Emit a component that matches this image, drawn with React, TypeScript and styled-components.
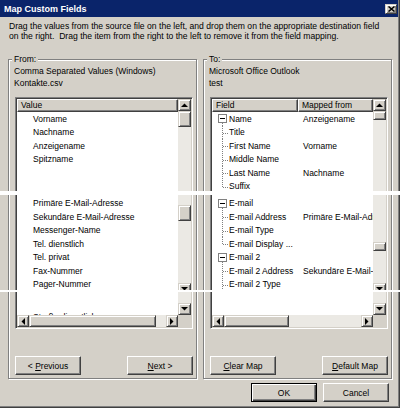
import React from 'react'
import styled, { createGlobalStyle, css } from 'styled-components'

const face = '#d4d0c8'

const GlobalStyle = createGlobalStyle`
  html, body {
    margin: 0;
    padding: 0;
    background: ${face};
  }
  body {
    font-family: "Liberation Sans", Arial, sans-serif;
    font-size: 8.5px;
    color: #000;
  }
`

// classic 3D edges
const raisedButton = css`
  background: ${face};
  border: 1px solid;
  border-color: #fff #404040 #404040 #fff;
  box-shadow: inset -1px -1px #808080;
`

const raisedScroll = css`
  background: ${face};
  border: 1px solid;
  border-color: ${face} #404040 #404040 ${face};
  box-shadow: inset 1px 1px #fff, inset -1px -1px #808080;
`

const Window = styled.div`
  position: relative;
  width: 400px;
  height: 408px;
  box-sizing: border-box;
  padding-right: 2px;
  background: ${face};
  box-shadow: inset -1px -1px #404040, inset -2px -2px #808080;
  display: flex;
  flex-direction: column;
`

const TitleBar = styled.div`
  height: 17px;
  flex-shrink: 0;
  background: #0a246a;
  display: flex;
  align-items: center;
  justify-content: space-between;
  padding: 0 1px 0 4px;
`

const Title = styled.span`
  color: #fff;
  font-weight: bold;
  font-size: 9px;
`

const CloseButton = styled.div`
  ${raisedScroll};
  box-sizing: border-box;
  width: 12px;
  height: 10px;
  display: flex;
  align-items: center;
  justify-content: center;
`

const Description = styled.div`
  margin: 4px 0 0 9px;
  line-height: 10px;
  font-size: 8.6px;
  white-space: pre;
`

const Panels = styled.div`
  display: grid;
  grid-template-columns: 189px 189px;
  column-gap: 6px;
  margin: 18px 0 0 8px;
`

const GroupBox = styled.div`
  box-sizing: border-box;
  border: 1px solid #808080;
  box-shadow: inset 1px 1px #fff, 1px 1px #fff;
  padding: 0 0 3px 5px;
  display: flex;
  flex-direction: column;
`

const GroupLabel = styled.div`
  align-self: flex-start;
  margin: -6px 0 0 -2px;
  padding: 0 2px;
  line-height: 10px;
  background: ${face};
`

const Info = styled.div`
  margin-top: 1px;
  line-height: 12px;
  white-space: nowrap;
`

const ListBox = styled.div`
  box-sizing: border-box;
  width: 178px;
  height: 232px;
  margin: 8px 0 0 1px;
  border: 1px solid;
  border-color: #808080 #fff #fff #808080;
  box-shadow: inset 1px 1px #404040, inset -1px -1px ${face};
  padding: 1px;
  display: grid;
  grid-template-columns: 1fr 13px;
  grid-template-rows: 1fr 12px;
`

const ListContent = styled.div`
  background: #fff;
  overflow: hidden;
  display: flex;
  flex-direction: column;
`

const Header = styled.div`
  display: flex;
  height: 13px;
  flex-shrink: 0;
`

const HeaderCell = styled.div<{ $width?: number }>`
  ${raisedButton};
  box-sizing: border-box;
  ${p => (p.$width ? `width: ${p.$width}px; flex-shrink: 0;` : 'flex: 1;')}
  padding-left: 3px;
  line-height: 11px;
  white-space: nowrap;
  overflow: hidden;
`

const Row = styled.div`
  height: 13.5px;
  flex-shrink: 0;
  display: flex;
  align-items: center;
  white-space: nowrap;
  padding-left: 16px;
`

const Blank = styled.div<{ $h: number }>`
  height: ${p => p.$h}px;
  flex-shrink: 0;
`

const TreeRow = styled.div`
  height: 13.5px;
  flex-shrink: 0;
  display: flex;
  align-items: stretch;
  white-space: nowrap;
`

const FieldCell = styled.div`
  width: 86px;
  flex-shrink: 0;
  box-sizing: border-box;
  padding-left: 6px;
  display: flex;
  align-items: center;
  overflow: hidden;
  svg {
    flex-shrink: 0;
    align-self: stretch;
  }
`

const MapCell = styled.div`
  padding-left: 5px;
  display: flex;
  align-items: center;
`

const VScroll = styled.div`
  background: #ebe9e4;
  display: flex;
  flex-direction: column;
  overflow: hidden;
`

const HScroll = styled.div`
  background: #ebe9e4;
  display: flex;
`

const Corner = styled.div`
  background: ${face};
`

const ArrowButton = styled.div<{ $w?: number }>`
  ${raisedScroll};
  box-sizing: border-box;
  width: ${p => p.$w ?? 13}px;
  height: 12px;
  flex-shrink: 0;
  display: flex;
  align-items: center;
  justify-content: center;
`

const CutArrow = styled.div<{ $h: number }>`
  height: ${p => p.$h}px;
  flex-shrink: 0;
  overflow: hidden;
`

const Thumb = styled.div<{ $len: number; $horizontal?: boolean }>`
  ${raisedScroll};
  box-sizing: border-box;
  flex-shrink: 0;
  ${p => (p.$horizontal ? `width: ${p.$len}px;` : `height: ${p.$len}px;`)}
`

const Track = styled.div<{ $len?: number }>`
  ${p => (p.$len !== undefined ? `height: ${p.$len}px; flex-shrink: 0;` : 'flex: 1;')}
`

const ButtonRow = styled.div`
  display: flex;
  justify-content: space-between;
  width: 178px;
  margin: 27px 0 0 1px;
`

const PushButton = styled.div<{ $default?: boolean }>`
  box-sizing: border-box;
  width: 66px;
  height: 19px;
  display: flex;
  align-items: center;
  justify-content: center;
  white-space: pre;
  ${p =>
    p.$default
      ? css`
          background: ${face};
          border: 1px solid #000;
          box-shadow: inset 1px 1px #fff, inset -1px -1px #404040, inset -2px -2px #808080;
        `
      : raisedButton}
`

const Footer = styled.div`
  display: flex;
  justify-content: flex-end;
  gap: 6px;
  margin-top: 4px;
  padding-right: 9px;
`

// white seams across the whole dialog
const Seam = styled.div<{ $top: number; $h: number }>`
  position: absolute;
  left: 0;
  right: 0;
  top: ${p => p.$top}px;
  height: ${p => p.$h}px;
  background: #fff;
`

type Dir = 'up' | 'down' | 'left' | 'right'

const arrowPoints: Record<Dir, string> = {
  up: '0,4 7,4 3.5,0.5',
  down: '0,0 7,0 3.5,3.5',
  left: '4,0 4,7 0.5,3.5',
  right: '0,0 0,7 3.5,3.5',
}

const Arrow = ({ dir }: { dir: Dir }) => {
  const flat = dir === 'up' || dir === 'down'
  return (
    <svg width={flat ? 7 : 4} height={flat ? 4 : 7} viewBox={flat ? '0 0 7 4' : '0 0 4 7'}>
      <polygon points={arrowPoints[dir]} fill="#000" />
    </svg>
  )
}

const CloseGlyph = () => (
  <svg width="7" height="6" viewBox="0 0 7 6">
    <path d="M0.5 0.5 L6.5 5.5 M6.5 0.5 L0.5 5.5" stroke="#000" strokeWidth="1.5" />
  </svg>
)

const Expander = () => (
  <svg width="11" height="13.5" viewBox="0 0 11 13.5">
    <rect x="0.5" y="2.5" width="8" height="8" fill="#fff" stroke="#808080" shapeRendering="crispEdges" />
    <line x1="2" y1="6.5" x2="7" y2="6.5" stroke="#000" shapeRendering="crispEdges" />
    <line x1="4.5" y1="11" x2="4.5" y2="13.5" stroke="#808080" strokeDasharray="1 1" shapeRendering="crispEdges" />
  </svg>
)

const Branch = ({ last }: { last?: boolean }) => (
  <svg width="11" height="13.5" viewBox="0 0 11 13.5">
    <line x1="4.5" y1="0" x2="4.5" y2={last ? 7 : 13.5} stroke="#808080" strokeDasharray="1 1" shapeRendering="crispEdges" />
    <line x1="5" y1="7" x2="11" y2="7" stroke="#808080" strokeDasharray="1 1" shapeRendering="crispEdges" />
  </svg>
)

type TreeItem = { field: string; mapped?: string; parent?: boolean; last?: boolean }

const topFields: TreeItem[] = [
  { field: 'Name', mapped: 'Anzeigename', parent: true },
  { field: 'Title' },
  { field: 'First Name', mapped: 'Vorname' },
  { field: 'Middle Name' },
  { field: 'Last Name', mapped: 'Nachname' },
  { field: 'Suffix', last: true },
]

const mailFields: TreeItem[] = [
  { field: 'E-mail', parent: true },
  { field: 'E-mail Address', mapped: 'Primäre E-Mail-Adresse' },
  { field: 'E-mail Type' },
  { field: 'E-mail Display ...', last: true },
  { field: 'E-mail 2', parent: true },
  { field: 'E-mail 2 Address', mapped: 'Sekundäre E-Mail-Adresse' },
  { field: 'E-mail 2 Type' },
]

const TreeRows = ({ items }: { items: TreeItem[] }) => (
  <>
    {items.map(item => (
      <TreeRow key={item.field}>
        <FieldCell>
          {item.parent ? <Expander /> : <Branch last={item.last} />}
          <span>{item.field}</span>
        </FieldCell>
        {item.mapped && <MapCell>{item.mapped}</MapCell>}
      </TreeRow>
    ))}
  </>
)

const VerticalBar = ({ thumb, first, second }: { thumb: number; first: number; second: number }) => (
  <VScroll>
    <ArrowButton>
      <Arrow dir="up" />
    </ArrowButton>
    <Thumb $len={thumb} />
    <Track $len={first} />
    <Thumb $len={thumb} />
    <Track $len={second} />
    <CutArrow $h={9}>
      <ArrowButton>
        <Arrow dir="down" />
      </ArrowButton>
    </CutArrow>
    <Track $len={11} />
    <ArrowButton>
      <Arrow dir="down" />
    </ArrowButton>
  </VScroll>
)

const HorizontalBar = ({ thumb }: { thumb: number }) => (
  <HScroll>
    <ArrowButton $w={12}>
      <Arrow dir="left" />
    </ArrowButton>
    <Thumb $len={thumb} $horizontal />
    <Track />
    <ArrowButton $w={12}>
      <Arrow dir="right" />
    </ArrowButton>
  </HScroll>
)

const sourceTop = ['Vorname', 'Nachname', 'Anzeigename', 'Spitzname']
const sourceMid = [
  'Primäre E-Mail-Adresse',
  'Sekundäre E-Mail-Adresse',
  'Messenger-Name',
  'Tel. dienstlich',
  'Tel. privat',
  'Fax-Nummer',
  'Pager-Nummer',
]

export default function App() {
  return (
    <Window>
      <GlobalStyle />
      <TitleBar>
        <Title>Map Custom Fields</Title>
        <CloseButton>
          <CloseGlyph />
        </CloseButton>
      </TitleBar>

      <Description>
        {'Drag the values from the source file on the left, and drop them on the appropriate destination field\non the right.  Drag the item from the right to the left to remove it from the field mapping.'}
      </Description>

      <Panels>
        <GroupBox>
          <GroupLabel>From:</GroupLabel>
          <Info>
            Comma Separated Values (Windows)
            <br />
            Kontakte.csv
          </Info>
          <ListBox>
            <ListContent>
              <Header>
                <HeaderCell>Value</HeaderCell>
              </Header>
              {sourceTop.map(v => (
                <Row key={v}>{v}</Row>
              ))}
              <Blank $h={30.5} />
              {sourceMid.map(v => (
                <Row key={v}>{v}</Row>
              ))}
              <Blank $h={19} />
              <Row>Straße dienstlich</Row>
            </ListContent>
            <VerticalBar thumb={16} first={78} second={62} />
            <HorizontalBar thumb={127} />
            <Corner />
          </ListBox>
          <ButtonRow>
            <PushButton>
              {'< '}
              <u>P</u>revious
            </PushButton>
            <PushButton>
              <u>N</u>
              {'ext >'}
            </PushButton>
          </ButtonRow>
        </GroupBox>

        <GroupBox>
          <GroupLabel>To:</GroupLabel>
          <Info>
            Microsoft Office Outlook
            <br />
            test
          </Info>
          <ListBox>
            <ListContent>
              <Header>
                <HeaderCell $width={86}>Field</HeaderCell>
                <HeaderCell>Mapped from</HeaderCell>
              </Header>
              <TreeRows items={topFields} />
              <Blank $h={3.5} />
              <TreeRows items={mailFields} />
            </ListContent>
            <VScroll>
              <ArrowButton>
                <Arrow dir="up" />
              </ArrowButton>
              <Thumb $len={9} />
              <Track $len={122} />
              <Thumb $len={9} />
              <Track $len={32} />
              <CutArrow $h={9}>
                <ArrowButton>
                  <Arrow dir="down" />
                </ArrowButton>
              </CutArrow>
              <Track $len={11} />
              <ArrowButton>
                <Arrow dir="down" />
              </ArrowButton>
            </VScroll>
            <HorizontalBar thumb={65} />
            <Corner />
          </ListBox>
          <ButtonRow>
            <PushButton>
              <u>C</u>lear Map
            </PushButton>
            <PushButton>
              <u>D</u>efault Map
            </PushButton>
          </ButtonRow>
        </GroupBox>
      </Panels>

      <Footer>
        <PushButton $default>OK</PushButton>
        <PushButton>Cancel</PushButton>
      </Footer>

      <Seam $top={191} $h={4} />
      <Seam $top={290} $h={2} />
    </Window>
  )
}
